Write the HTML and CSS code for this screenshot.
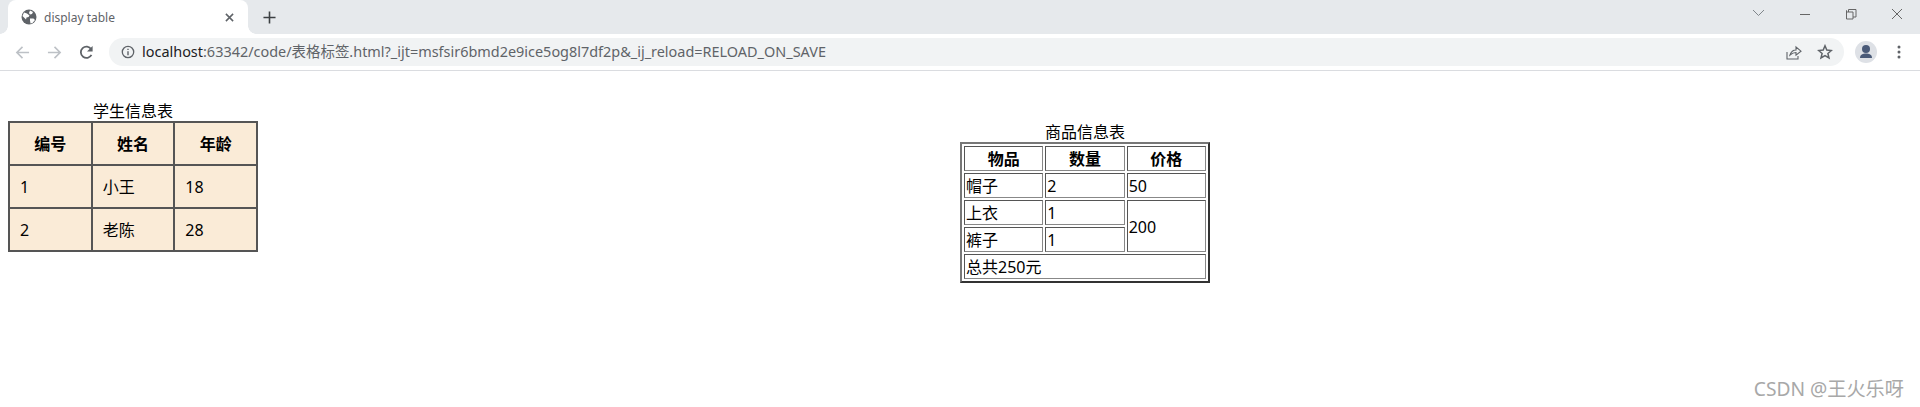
FILE: index.html
```html
<!DOCTYPE html>
<html lang="zh">
<head>
<meta charset="utf-8">
<title>display table</title>
<link rel="stylesheet" href="styles.css">
</head>
<body>
<header class="browser">
  <div class="tabstrip">
    <div class="tab">
      <svg class="favicon" viewBox="0 0 16 16"><circle cx="8" cy="8" r="7.5" fill="#5f6368"/><path d="M3 3.5l3 1 2.5 2-1 1.5-2 .5-.5 2-2-2-1.500-1.500zM9 1.500l3 1.500-1 2-2 .5-1-1.500zM9 9.500l3.500 0 1.500 1.500-2.500 3-2 .5-.5-3z" fill="#fff"/></svg>
      <span class="tab-title">display table</span>
      <svg class="tab-close" viewBox="0 0 10 10"><path d="M1 1l8 8M9 1l-8 8" stroke="#5f6368" stroke-width="1.700" fill="none"/></svg>
    </div>
    <svg class="newtab" viewBox="0 0 14 14"><path d="M7 .5v13M.5 7h13" stroke="#3c4043" stroke-width="1.700" fill="none"/></svg>
    <div class="window-controls">
      <svg class="win" viewBox="0 0 46 20"><path d="M17 6l5.500 5.500L28 6" stroke="#80868b" fill="none"/></svg>
      <svg class="win" viewBox="0 0 46 20"><path d="M18 10.500h10" stroke="#666" fill="none"/></svg>
      <svg class="win" viewBox="0 0 46 20"><path d="M18.500 6.500V15h6.500V8H18.500zM20.500 8V5.500H28V13h-3" stroke="#666" fill="none"/></svg>
      <svg class="win" viewBox="0 0 46 20"><path d="M18 5l10 10M28 5L18 15" stroke="#666" fill="none"/></svg>
    </div>
  </div>
  <div class="toolbar">
    <svg class="nav" viewBox="0 0 16 16"><path d="M15 8H2M8 2L2 8l6 6" stroke="#bdc1c6" stroke-width="1.700" fill="none"/></svg>
    <svg class="nav" viewBox="0 0 16 16"><path d="M1 8h13M8 2l6 6-6 6" stroke="#bdc1c6" stroke-width="1.700" fill="none"/></svg>
    <svg class="nav" viewBox="0 0 16 16"><path d="M13.300 10.500A6 6 0 1 1 13 4.500" stroke="#5f6368" stroke-width="1.900" fill="none"/><path d="M14.500 1v6h-6z" fill="#5f6368"/></svg>
    <div class="omnibox">
      <svg class="info" viewBox="0 0 14 14"><circle cx="7" cy="7" r="5.700" stroke="#5f6368" stroke-width="1.300" fill="none"/><path d="M7 6.200v4M7 3.800v1.300" stroke="#5f6368" stroke-width="1.400"/></svg>
      <span class="url"><span class="host">localhost</span>:63342/code/表格标签.html?_ijt=msfsir6bmd2e9ice5og8l7df2p&amp;_ij_reload=RELOAD_ON_SAVE</span>
      <svg class="share" viewBox="0 0 16 16"><path d="M1 8v7h11v-3M1 15" stroke="#5f6368" stroke-width="1.100" fill="none"/><path d="M4 11c1-3 3-5 6-5V3l5 4.200-5 4V8.500c-2 0-4 .8-6 2.500z" stroke="#5f6368" stroke-width="1.100" fill="none"/></svg>
      <svg class="star" viewBox="0 0 16 16"><path d="M8 1.800l1.800 4.300 4.600.4-3.500 3 1.100 4.500L8 11.600 4 14l1.100-4.500-3.500-3 4.600-.4z" stroke="#5f6368" stroke-width="1.500" fill="none"/></svg>
    </div>
    <div class="avatar"><svg viewBox="0 0 22 22"><circle cx="11" cy="8" r="4" fill="#4a5a78"/><path d="M5 17c0-3.500 3-4.500 6-4.500s6 1 6 4.500z" fill="#4a5a78"/></svg></div>
    <svg class="menu" viewBox="0 0 4 14"><circle cx="2" cy="2" r="1.500" fill="#5f6368"/><circle cx="2" cy="7" r="1.500" fill="#5f6368"/><circle cx="2" cy="12" r="1.500" fill="#5f6368"/></svg>
  </div>
</header>
<main class="content">
  <table class="students">
    <caption>学生信息表</caption>
    <tr><th>编号</th><th>姓名</th><th>年龄</th></tr>
    <tr><td>1</td><td>小王</td><td>18</td></tr>
    <tr><td>2</td><td>老陈</td><td>28</td></tr>
  </table>
  <table class="goods">
    <caption>商品信息表</caption>
    <tr><th>物品</th><th>数量</th><th>价格</th></tr>
    <tr><td>帽子</td><td>2</td><td>50</td></tr>
    <tr><td>上衣</td><td>1</td><td rowspan="2">200</td></tr>
    <tr><td>裤子</td><td>1</td></tr>
    <tr><td colspan="3">总共250元</td></tr>
  </table>
</main>
<div class="watermark">CSDN @王火乐呀</div>
</body>
</html>
```
FILE: styles.css
```css
* { box-sizing: border-box; }
html, body { margin: 0; height: 100%; }
body {
  position: relative;
  overflow: hidden;
  background: #fff;
  color: #000;
  font-family: "Noto Sans", "Noto Sans CJK SC", sans-serif;
  font-size: 16px;
  line-height: 21px;
}
.browser { height: 71px; border-bottom: 1px solid #dadce0; }
.tabstrip { height: 34px; background: #e6e9ec; display: flex; padding-left: 8px; }
.tab {
  position: relative;
  width: 240px;
  height: 34px;
  background: #fff;
  border-radius: 8px 8px 0 0;
  display: flex;
  align-items: center;
  padding: 0 14px 0 13px;
}
.tab::before, .tab::after {
  content: "";
  position: absolute;
  bottom: 0;
  width: 8px;
  height: 8px;
  background: radial-gradient(circle at 0 0, #e6e9ec 7.500px, #fff 8px);
}
.tab::before { left: -8px; }
.tab::after { right: -8px; background: radial-gradient(circle at 100% 0, #e6e9ec 7.500px, #fff 8px); }
.favicon { width: 16px; height: 16px; margin-right: 7px; }
.tab-title { flex: 1; font-size: 12px; color: #5f6368; }
.tab-close { width: 9px; height: 9px; }
.newtab { width: 13px; height: 13px; margin: 11px 0 0 15px; }
.window-controls { margin-left: auto; display: flex; padding-top: 4px; height: 24px; }
.win { width: 46px; height: 20px; }
.toolbar { height: 36px; display: flex; align-items: center; padding: 0 0 0 15px; }
.nav { width: 15px; height: 15px; margin-right: 17px; }
.nav:nth-child(3) { margin-right: 15px; }
.omnibox {
  width: 1735px;
  height: 28px;
  background: #f1f3f4;
  border-radius: 14px;
  display: flex;
  align-items: center;
  padding: 0 11px 0 12px;
}
.info { width: 14px; height: 14px; margin-right: 7px; }
.url { flex: 1; font-size: 14.450px; color: #5f6368; white-space: nowrap; padding-bottom: 2px; }
.host { color: #202124; }
.share { width: 16px; height: 16px; margin-right: 15px; }
.star { width: 16px; height: 16px; }
.avatar { width: 22px; height: 22px; border-radius: 50%; background: #dee1e6; margin-left: 11px; }
.avatar svg { display: block; width: 22px; height: 22px; }
.menu { width: 4px; height: 14px; margin-left: 20px; }
.content { display: flex; align-items: flex-start; padding: 30px 0 0 8px; }
table { flex: none; }
.students {
  width: 250px;
  border-collapse: collapse;
  border: 2px solid #555;
  background: #faebd7;
}
.students caption { height: 20px; line-height: 20px; }
.students th, .students td {
  border: 2px solid #555;
  height: 43px;
  padding: 1px 10px 0;
  text-align: left;
}
.students th { text-align: center; }
.goods {
  width: 250px;
  margin: 23px 0 0 702px;
  border: 2px solid;
  border-color: #777 #333 #333 #777;
  border-spacing: 2px;
}
.goods caption { height: 18px; line-height: 16px; }
.goods th, .goods td {
  border: 1px solid;
  border-color: #555 #888 #888 #555;
  height: 25px;
  padding: 2px 1px 0;
}
.goods th { width: 33%; text-align: center; }
.watermark {
  position: absolute;
  right: 16px;
  bottom: 8px;
  font-size: 19.200px;
  color: #a8a8a8;
}
```
